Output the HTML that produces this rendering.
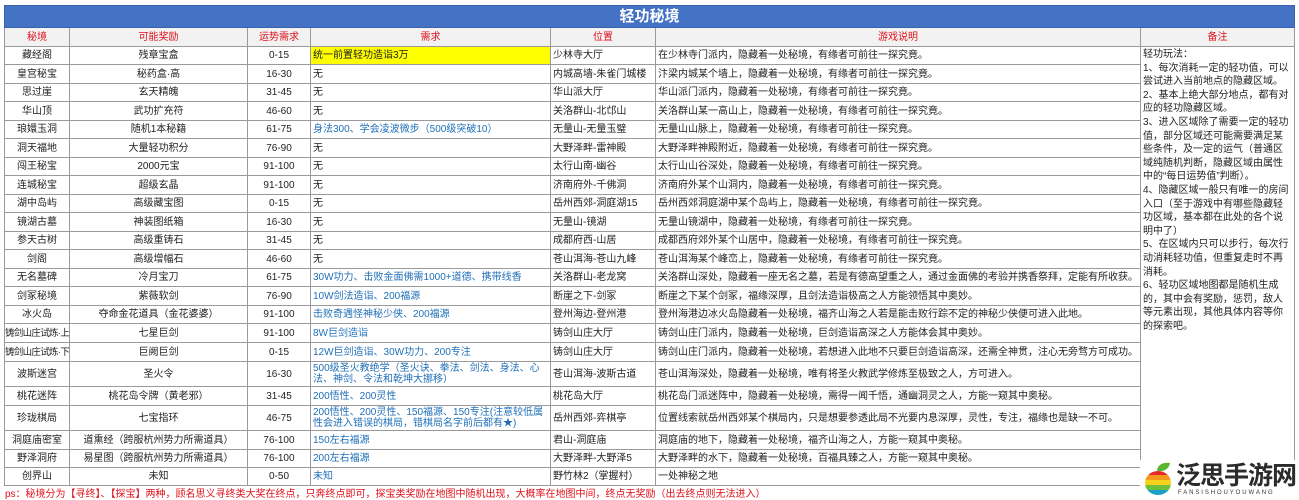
<!DOCTYPE html>
<html><head><meta charset="utf-8"><style>
body{margin:0;width:1299px;height:500px;background:#fff;overflow:hidden;font-family:"Liberation Sans","Noto Sans CJK SC",sans-serif;position:relative}
table{position:absolute;left:4px;top:5px;width:1290px;border-collapse:collapse;table-layout:fixed;font-size:10px;color:#222}
td{border:1px solid #9a9a9a;padding:0 2px;white-space:nowrap;overflow:hidden;line-height:11px}
.t{background:#4472c4;color:#fff;font-size:15px;font-weight:bold;text-align:center;border-color:#3a62aa}
.h td{background:#f2f2f2;color:#e0101a;text-align:center}
.c{text-align:center}
.s{font-size:9.5px;letter-spacing:-0.7px;padding:0}
.b{color:#1f6fb8}
.y{background:#ffff00}
.w{white-space:normal;line-height:11px}
.r{vertical-align:top;line-height:13.6px;padding:1px 2px;white-space:nowrap}
.ps{position:absolute;left:5px;top:485px;font-size:10px;color:#e0101a}
</style></head><body>
<table>
<colgroup><col style="width:65px"><col style="width:178px"><col style="width:63px"><col style="width:240px"><col style="width:105px"><col style="width:485px"><col style="width:154px"></colgroup>
<tr style="height:22px"><td class="t" colspan="7">轻功秘境</td></tr>
<tr class="h" style="height:19px"><td>秘境</td><td>可能奖励</td><td>运势需求</td><td>需求</td><td>位置</td><td>游戏说明</td><td>备注</td></tr>
<tr style="height:18px"><td class="c">藏经阁</td><td class="c">残章宝盒</td><td class="c">0-15</td><td class="y">统一前置轻功造诣3万</td><td>少林寺大厅</td><td>在少林寺门派内，隐藏着一处秘境，有缘者可前往一探究竟。</td>
<td class="r" rowspan="24">轻功玩法：<br>1、每次消耗一定的轻功值，可以<br>尝试进入当前地点的隐藏区域。<br>2、基本上绝大部分地点，都有对<br>应的轻功隐藏区域。<br>3、进入区域除了需要一定的轻功<br>值，部分区域还可能需要满足某<br>些条件，及一定的运气（普通区<br>域纯随机判断，隐藏区域由属性<br>中的“每日运势值”判断）。<br>4、隐藏区域一般只有唯一的房间<br>入口（至于游戏中有哪些隐藏轻<br>功区域，基本都在此处的各个说<br>明中了）<br>5、在区域内只可以步行，每次行<br>动消耗轻功值，但重复走时不再<br>消耗。<br>6、轻功区域地图都是随机生成<br>的，其中会有奖励，惩罚，敌人<br>等元素出现，其他具体内容等你<br>的探索吧。</td></tr>
<tr style="height:19px"><td class="c">皇宫秘宝</td><td class="c">秘药盒·高</td><td class="c">16-30</td><td>无</td><td>内城高墙-朱雀门城楼</td><td>汴梁内城某个墙上，隐藏着一处秘境，有缘者可前往一探究竟。</td></tr>
<tr style="height:18px"><td class="c">思过崖</td><td class="c">玄天精魄</td><td class="c">31-45</td><td>无</td><td>华山派大厅</td><td>华山派门派内，隐藏着一处秘境，有缘者可前往一探究竟。</td></tr>
<tr style="height:19px"><td class="c">华山顶</td><td class="c">武功扩充符</td><td class="c">46-60</td><td>无</td><td>关洛群山-北邙山</td><td>关洛群山某一高山上，隐藏着一处秘境，有缘者可前往一探究竟。</td></tr>
<tr style="height:18px"><td class="c">琅嬛玉洞</td><td class="c">随机1本秘籍</td><td class="c">61-75</td><td class="b">身法300、学会凌波微步（500级突破10）</td><td>无量山-无量玉璧</td><td>无量山山脉上，隐藏着一处秘境，有缘者可前往一探究竟。</td></tr>
<tr style="height:19px"><td class="c">洞天福地</td><td class="c">大量轻功积分</td><td class="c">76-90</td><td>无</td><td>大野泽畔-雷神殿</td><td>大野泽畔神殿附近，隐藏着一处秘境，有缘者可前往一探究竟。</td></tr>
<tr style="height:18px"><td class="c">闯王秘宝</td><td class="c">2000元宝</td><td class="c">91-100</td><td>无</td><td>太行山南-幽谷</td><td>太行山山谷深处，隐藏着一处秘境，有缘者可前往一探究竟。</td></tr>
<tr style="height:19px"><td class="c">连城秘宝</td><td class="c">超级玄晶</td><td class="c">91-100</td><td>无</td><td>济南府外-千佛洞</td><td>济南府外某个山洞内，隐藏着一处秘境，有缘者可前往一探究竟。</td></tr>
<tr style="height:18px"><td class="c">湖中岛屿</td><td class="c">高级藏宝图</td><td class="c">0-15</td><td>无</td><td>岳州西郊-洞庭湖15</td><td>岳州西郊洞庭湖中某个岛屿上，隐藏着一处秘境，有缘者可前往一探究竟。</td></tr>
<tr style="height:19px"><td class="c">镜湖古墓</td><td class="c">神装图纸箱</td><td class="c">16-30</td><td>无</td><td>无量山-镜湖</td><td>无量山镜湖中，隐藏着一处秘境，有缘者可前往一探究竟。</td></tr>
<tr style="height:18px"><td class="c">参天古树</td><td class="c">高级重铸石</td><td class="c">31-45</td><td>无</td><td>成都府西-山居</td><td>成都西府郊外某个山居中，隐藏着一处秘境，有缘者可前往一探究竟。</td></tr>
<tr style="height:19px"><td class="c">剑阁</td><td class="c">高级增幅石</td><td class="c">46-60</td><td>无</td><td>苍山洱海-苍山九峰</td><td>苍山洱海某个峰峦上，隐藏着一处秘境，有缘者可前往一探究竟。</td></tr>
<tr style="height:18px"><td class="c">无名墓碑</td><td class="c">冷月宝刀</td><td class="c">61-75</td><td class="b">30W功力、击败金面佛需1000+道德、携带线香</td><td>关洛群山-老龙窝</td><td>关洛群山深处，隐藏着一座无名之墓，若是有德高望重之人，通过金面佛的考验并携香祭拜，定能有所收获。</td></tr>
<tr style="height:19px"><td class="c">剑冢秘境</td><td class="c">紫薇软剑</td><td class="c">76-90</td><td class="b">10W剑法造诣、200福源</td><td>断崖之下-剑冢</td><td>断崖之下某个剑冢，福缘深厚，且剑法造诣极高之人方能领悟其中奥妙。</td></tr>
<tr style="height:18px"><td class="c">冰火岛</td><td class="c">夺命金花道具（金花婆婆）</td><td class="c">91-100</td><td class="b">击败奇遇怪神秘少侠、200福源</td><td>登州海边-登州港</td><td>登州海港边冰火岛隐藏着一处秘境，福齐山海之人若是能击败行踪不定的神秘少侠便可进入此地。</td></tr>
<tr style="height:19px"><td class="c s">铸剑山庄试炼·上</td><td class="c">七星巨剑</td><td class="c">91-100</td><td class="b">8W巨剑造诣</td><td>铸剑山庄大厅</td><td>铸剑山庄门派内，隐藏着一处秘境，巨剑造诣高深之人方能体会其中奥妙。</td></tr>
<tr style="height:19px"><td class="c s">铸剑山庄试炼·下</td><td class="c">巨阙巨剑</td><td class="c">0-15</td><td class="b">12W巨剑造诣、30W功力、200专注</td><td>铸剑山庄大厅</td><td>铸剑山庄门派内，隐藏着一处秘境，若想进入此地不只要巨剑造诣高深，还需全神贯，注心无旁骛方可成功。</td></tr>
<tr style="height:25px"><td class="c">波斯迷宫</td><td class="c">圣火令</td><td class="c">16-30</td><td class="b w">500级圣火教绝学（圣火诀、拳法、剑法、身法、心法、神剑、令法和乾坤大挪移）</td><td>苍山洱海-波斯古道</td><td>苍山洱海深处，隐藏着一处秘境，唯有将圣火教武学修炼至极致之人，方可进入。</td></tr>
<tr style="height:19px"><td class="c">桃花迷阵</td><td class="c">桃花岛令牌（黄老邪）</td><td class="c">31-45</td><td class="b">200悟性、200灵性</td><td>桃花岛大厅</td><td>桃花岛门派迷阵中，隐藏着一处秘境，需得一闻千悟，通幽洞灵之人，方能一窥其中奥秘。</td></tr>
<tr style="height:25px"><td class="c">珍珑棋局</td><td class="c">七宝指环</td><td class="c">46-75</td><td class="b w">200悟性、200灵性、150福源、150专注(注意较低属性会进入错误的棋局，错棋局名字前后都有★)</td><td>岳州西郊-弈棋亭</td><td>位置线索就岳州西郊某个棋局内，只是想要参透此局不光要内息深厚，灵性，专注，福缘也是缺一不可。</td></tr>
<tr style="height:19px"><td class="c">洞庭庙密室</td><td class="c">道熏经（跨服杭州势力所需道具）</td><td class="c">76-100</td><td class="b">150左右福源</td><td>君山-洞庭庙</td><td>洞庭庙的地下，隐藏着一处秘境，福齐山海之人，方能一窥其中奥秘。</td></tr>
<tr style="height:18px"><td class="c">野泽洞府</td><td class="c">易星图（跨服杭州势力所需道具）</td><td class="c">76-100</td><td class="b">200左右福源</td><td>大野泽畔-大野泽5</td><td>大野泽畔的水下，隐藏着一处秘境，百福具臻之人，方能一窥其中奥秘。</td></tr>
<tr style="height:18px"><td class="c">创界山</td><td class="c">未知</td><td class="c">0-50</td><td class="b">未知</td><td>野竹林2（掌握村）</td><td>一处神秘之地</td></tr>
</table>
<div class="ps">ps：秘境分为【寻终】、【探宝】两种，顾名思义寻终类大奖在终点，只奔终点即可，探宝类奖励在地图中随机出现，大概率在地图中间，终点无奖励（出去终点则无法进入）</div>
<div style="position:absolute;left:1140px;top:460px;width:159px;height:40px;background:#fff"></div>
<svg style="position:absolute;left:1143px;top:461px" width="32" height="36" viewBox="0 0 32 36">
<defs><clipPath id="a"><ellipse cx="15" cy="22" rx="13" ry="12"/></clipPath></defs>
<g clip-path="url(#a)"><rect x="0" y="8" width="32" height="6" fill="#e8262b"/><rect x="0" y="14" width="32" height="5" fill="#f39a1e"/><rect x="0" y="19" width="32" height="5" fill="#f6d21b"/><rect x="0" y="24" width="32" height="5" fill="#6cbf3f"/><rect x="0" y="29" width="32" height="7" fill="#1aa0c8"/></g>
<path d="M14 10 C14 4 20 1 27 2 C26 8 21 11 14 10Z" fill="#5cb531"/>
</svg>
<div style="position:absolute;left:1176px;top:460px;font-size:25px;font-weight:bold;color:#2b2b2b;letter-spacing:-1px;line-height:28px;font-family:'Noto Sans CJK SC',sans-serif">泛思手游网</div>
<div style="position:absolute;left:1178px;top:489px;font-size:6px;color:#333;letter-spacing:1.9px;line-height:8px">FANSISHOUYOUWANG</div>
</body></html>
